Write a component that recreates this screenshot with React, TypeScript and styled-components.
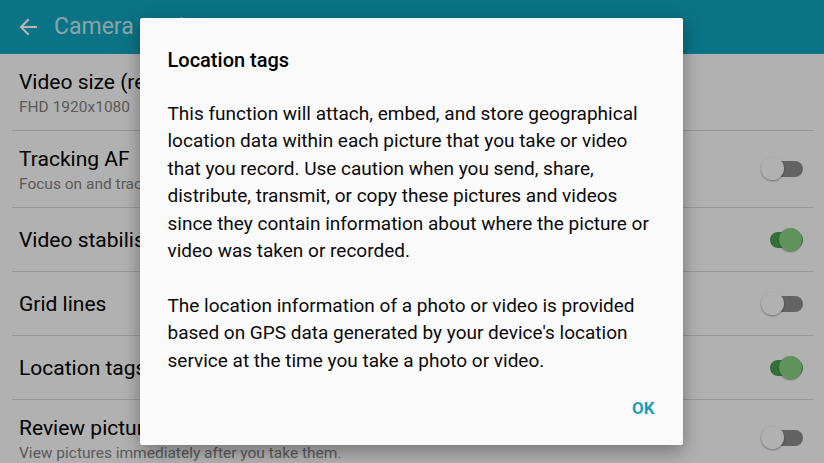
import styled, { createGlobalStyle } from 'styled-components';

const GlobalStyle = createGlobalStyle`
  html, body {
    margin: 0;
    padding: 0;
    width: 824px;
    height: 463px;
    overflow: hidden;
    font-family: Roboto, "Noto Sans", sans-serif;
    background: #fafafa;
  }
`;

type Setting = {
  title: string;
  summary?: string;
  toggle?: boolean;
};

const settings: Setting[] = [
  { title: 'Video size (rear)', summary: 'FHD 1920x1080' },
  { title: 'Tracking AF', summary: 'Focus on and track a selected subject.', toggle: false },
  { title: 'Video stabilisation', toggle: true },
  { title: 'Grid lines', toggle: false },
  { title: 'Location tags', toggle: true },
  { title: 'Review pictures', summary: 'View pictures immediately after you take them.', toggle: false },
];

export default function App() {
  return (
    <Screen>
      <GlobalStyle />
      <AppBar>
        <BackButton type="button" aria-label="Back">
          <svg width="20" height="20" viewBox="0 0 20 20" fill="none" stroke="#ffffff" strokeWidth="2" strokeLinecap="square">
            <path d="M18 10H3" />
            <path d="M10 3L3 10l7 7" />
          </svg>
        </BackButton>
        <AppTitle>Camera settings</AppTitle>
      </AppBar>

      <List>
        {settings.map((s) => (
          <Row key={s.title} $tall={!!s.summary}>
            <RowText>
              <RowTitle>{s.title}</RowTitle>
              {s.summary && <RowSummary>{s.summary}</RowSummary>}
            </RowText>
            {s.toggle !== undefined && (
              <Switch $on={s.toggle}>
                <Thumb $on={s.toggle} />
              </Switch>
            )}
          </Row>
        ))}
      </List>

      <Scrim>
        <Dialog>
          <DialogTitle>Location tags</DialogTitle>
          <DialogBody>
            This function will attach, embed, and store geographical location data within each
            picture that you take or video that you record. Use caution when you send, share,
            distribute, transmit, or copy these pictures and videos since they contain information
            about where the picture or video was taken or recorded.
          </DialogBody>
          <DialogBody>
            The location information of a photo or video is provided based on GPS data generated
            by your device's location service at the time you take a photo or video.
          </DialogBody>
          <DialogActions>
            <TextButton type="button">OK</TextButton>
          </DialogActions>
        </Dialog>
      </Scrim>
    </Screen>
  );
}

const Screen = styled.div`
  position: relative;
  width: 824px;
  height: 463px;
  overflow: hidden;
  background: #fafafa;
`;

const AppBar = styled.header`
  height: 54px;
  background: #10a3bd;
  display: flex;
  align-items: center;
  padding-left: 17px;
  gap: 15px;
`;

const BackButton = styled.button`
  background: none;
  border: 0;
  padding: 0;
  width: 22px;
  height: 22px;
  display: flex;
  align-items: center;
  justify-content: center;
`;

const AppTitle = styled.h1`
  margin: 0;
  font-size: 23px;
  font-weight: 400;
  color: rgba(255, 255, 255, 0.75);
  padding-bottom: 1px;
`;

const List = styled.ul`
  list-style: none;
  margin: 0;
  padding: 0 11px 0 12px;
`;

const Row = styled.li<{ $tall: boolean }>`
  height: ${(p) => (p.$tall ? 77 : 64)}px;
  display: flex;
  align-items: center;
  justify-content: space-between;
  padding: 0 10px 0 7px;
  border-bottom: 1px solid #d6d6d6;
  box-sizing: border-box;
`;

const RowText = styled.div`
  display: flex;
  flex-direction: column;
  gap: 4px;
  padding-top: 1px;
`;

const RowTitle = styled.span`
  font-size: 21px;
  color: #000000;
`;

const RowSummary = styled.span`
  font-size: 15.5px;
  color: #808080;
`;

const Switch = styled.span<{ $on: boolean }>`
  position: relative;
  width: 33px;
  height: 16px;
  border-radius: 8px;
  background: ${(p) => (p.$on ? '#4b9f4b' : '#8c8c8c')};
`;

const Thumb = styled.span<{ $on: boolean }>`
  position: absolute;
  top: -4px;
  left: ${(p) => (p.$on ? '9px' : '-9px')};
  width: 23px;
  height: 23px;
  border-radius: 50%;
  background: ${(p) => (p.$on ? '#88d080' : '#fafafa')};
  box-shadow: 0 1px 2px rgba(0, 0, 0, 0.35);
`;

const Scrim = styled.div`
  position: absolute;
  inset: 0;
  background: rgba(0, 0, 0, 0.29);
  display: flex;
  align-items: flex-start;
  justify-content: center;
  padding-top: 18px;
  padding-right: 2px;
`;

const Dialog = styled.div`
  width: 543px;
  height: 427px;
  box-sizing: border-box;
  background: #fafafa;
  border-radius: 2px;
  box-shadow: 0 6px 18px rgba(0, 0, 0, 0.35);
  padding: 29px 26px 0 28px;
  display: flex;
  flex-direction: column;
`;

const DialogTitle = styled.h2`
  margin: 0 0 27px;
  font-size: 20px;
  font-weight: 500;
  color: #000000;
  line-height: 26px;
`;

const DialogBody = styled.p`
  margin: 0 0 27.4px;
  font-size: 19px;
  line-height: 27.4px;
  color: #0a0a0a;
`;

const DialogActions = styled.div`
  display: flex;
  justify-content: flex-end;
  margin-top: -3px;
  padding-right: 2px;
`;

const TextButton = styled.button`
  background: none;
  border: 0;
  padding: 0;
  font-family: Roboto, "Noto Sans", sans-serif;
  font-size: 17px;
  font-weight: 700;
  color: #1e9fb4;
`;
